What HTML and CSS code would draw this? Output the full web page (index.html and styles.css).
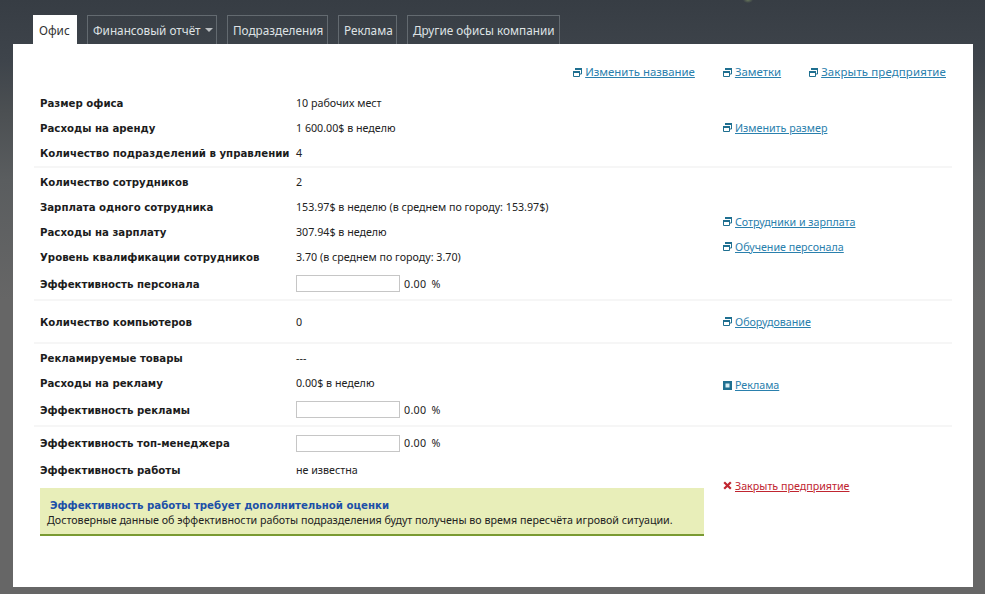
FILE: index.html
```html
<!DOCTYPE html>
<html lang="ru">
<head>
<meta charset="utf-8">
<title>Офис</title>
<link rel="stylesheet" href="styles.css">
</head>
<body>
<svg class="defs" width="0" height="0" aria-hidden="true">
  <symbol id="win" viewBox="0 0 9 9"><path d="M2.500 1h6v5h-2" fill="none" stroke="currentColor"/><path d="M2 0h7v2H2z" fill="currentColor"/><path d="M.5 4h6v4.500h-6z" fill="none" stroke="currentColor"/><path d="M0 3h7v2H0z" fill="currentColor"/></symbol>
</svg>
<nav class="tabs">
  <a class="tab active">Офис</a>
  <a class="tab">Финансовый отчёт <span class="caret"></span></a>
  <a class="tab">Подразделения</a>
  <a class="tab">Реклама</a>
  <a class="tab">Другие офисы компании</a>
</nav>
<main class="panel">
  <div class="toplinks">
    <a class="link"><svg class="ic"><use href="#win"/></svg>Изменить название</a>
    <a class="link"><svg class="ic"><use href="#win"/></svg>Заметки</a>
    <a class="link wide"><svg class="ic"><use href="#win"/></svg>Закрыть предприятие</a>
  </div>
  <section class="sec s1">
    <div class="rows">
      <div class="row"><b>Размер офиса</b><span>10 рабочих мест</span></div>
      <div class="row"><b>Расходы на аренду</b><span>1 600.00$ в неделю</span></div>
      <div class="row"><b>Количество подразделений в управлении</b><span>4</span></div>
    </div>
    <div class="side"><a class="link"><svg class="ic"><use href="#win"/></svg>Изменить размер</a></div>
  </section>
  <section class="sec s2">
    <div class="rows">
      <div class="row"><b>Количество сотрудников</b><span>2</span></div>
      <div class="row"><b>Зарплата одного сотрудника</b><span>153.97$ в неделю (в среднем по городу: 153.97$)</span></div>
      <div class="row"><b>Расходы на зарплату</b><span>307.94$ в неделю</span></div>
      <div class="row"><b>Уровень квалификации сотрудников</b><span>3.70 (в среднем по городу: 3.70)</span></div>
      <div class="row tall"><b>Эффективность персонала</b><span class="meter"><i class="bar"></i>0.00 %</span></div>
    </div>
    <div class="side">
      <a class="link"><svg class="ic"><use href="#win"/></svg>Сотрудники и зарплата</a>
      <a class="link"><svg class="ic"><use href="#win"/></svg>Обучение персонала</a>
    </div>
  </section>
  <section class="sec s3">
    <div class="rows">
      <div class="row"><b>Количество компьютеров</b><span>0</span></div>
    </div>
    <div class="side"><a class="link"><svg class="ic"><use href="#win"/></svg>Оборудование</a></div>
  </section>
  <section class="sec s4">
    <div class="rows">
      <div class="row"><b>Рекламируемые товары</b><span>---</span></div>
      <div class="row"><b>Расходы на рекламу</b><span>0.00$ в неделю</span></div>
      <div class="row tall"><b>Эффективность рекламы</b><span class="meter"><i class="bar"></i>0.00 %</span></div>
    </div>
    <div class="side"><a class="link"><svg class="ic" viewBox="0 0 9 9"><path d="M0 0h9v9H0z" fill="currentColor"/><path d="M2.500 2.500h4v4h-4z" fill="#d8eef5"/></svg>Реклама</a></div>
  </section>
  <section class="sec s5">
    <div class="rows">
      <div class="row tall"><b>Эффективность топ-менеджера</b><span class="meter"><i class="bar"></i>0.00 %</span></div>
      <div class="row"><b>Эффективность работы</b><span>не известна</span></div>
      <div class="alert">
        <h3>Эффективность работы требует дополнительной оценки</h3>
        <p>Достоверные данные об эффективности работы подразделения будут получены во время пересчёта игровой ситуации.</p>
      </div>
    </div>
    <div class="side"><a class="link danger"><svg class="ic" viewBox="0 0 9 9"><path d="M1.200 1.200l6.600 6.600M7.800 1.200L1.200 7.800" fill="none" stroke="currentColor" stroke-width="2.200"/></svg>Закрыть предприятие</a></div>
  </section>
</main>
</body>
</html>
```
FILE: styles.css
```css
* { box-sizing: border-box; }
html { height: 100%; }
body {
  margin: 0;
  height: 594px;
  overflow: hidden;
  padding: 15px 12px 7px 13px;
  display: flex;
  flex-direction: column;
  font: 10.700px/14px "Noto Sans", Tahoma, sans-serif;
  color: #222;
  background:
    radial-gradient(5px 3px at 748px 0, #66755a, transparent),
    linear-gradient(#373d44 0, #3e444b 60px, #4b4f52 110px, #5a5d5f 180px, #666 300px);
}
.defs { position: absolute; }
.tabs { display: grid; grid-template-columns: 44px 130px 101px 59px 153px; gap: 10px; padding-left: 20px; height: 29px; flex: none; }
.tab {
  display: block;
  padding: 7px 0 0 5px;
  height: 29px;
  border: 1px solid #636a70;
  border-bottom: 0;
  color: #dfe2e4;
  font-size: 11.750px;
  white-space: nowrap;
}
.tab.active { background: #fff; color: #333; border-color: #fff; }
.caret {
  display: inline-block;
  width: 0; height: 0;
  margin: 0 0 3px 1px;
  border: 4px solid transparent;
  border-top-color: #b9bdc0;
  border-bottom: 0;
}
.panel { flex: 1; background: #fff; padding-left: 21px; padding-right: 21px; }
.toplinks { display: flex; justify-content: flex-end; gap: 28px; height: 46px; padding: 21px 6px 0 0; font-size: 11.400px; }
.link.wide { letter-spacing: .15px; }
.sec { display: flex; border-bottom: 2px solid #f6f6f6; }
.sec:last-child { border-bottom: 0; }
.rows { width: 676px; flex: none; padding-left: 6px; }
.row { display: flex; align-items: center; height: 25px; }
.row.tall { height: 27px; margin-top: 1px; }
.row b { width: 256px; flex: none; padding-top: 2px; white-space: nowrap; color: #1c1c1c; font: bold 10.200px/14px "DejaVu Sans", Verdana, sans-serif; }
.meter { display: flex; align-items: center; word-spacing: 2px; letter-spacing: .3px; }
.bar { display: block; width: 104px; height: 17px; border: 1px solid #c6c6c6; margin-right: 4px; }
.side { flex: 1; display: flex; flex-direction: column; justify-content: center; gap: 11px; padding-left: 13px; }
.link { color: #2a80ad; text-decoration: underline; white-space: nowrap; line-height: 14px; }
.ic { display: inline-block; width: 9px; height: 9px; color: #1f6f90; margin-right: 3px; vertical-align: -0.500px; }
.danger, .danger .ic { color: #c02530; }
.s1 { padding-bottom: 1px; }
.s2 { padding-top: 1px; padding-bottom: 2px; }
.s2 .side { padding-top: 2px; }
.s3 { padding-top: 8px; padding-bottom: 8px; }
.s4 { padding-top: 1px; padding-bottom: 2px; }
.s4 .side { padding-top: 2px; }
.s5 { padding-top: 2px; }
.s5 .row.tall { margin-top: 0; height: 28px; }
.s5 .side { padding-top: 6px; }
.alert {
  margin: 6px 6px 0 0;
  height: 48px;
  background: #e8eeb9;
  border-bottom: 2px solid #7a9a32;
  padding: 10px 7px 0;
}
.alert h3 { margin: 1px 0 0 3px; font: bold 10.200px/14px "DejaVu Sans", Verdana, sans-serif; color: #1c50a8; }
.alert p { margin: 0; line-height: 14px; white-space: nowrap; }
```
